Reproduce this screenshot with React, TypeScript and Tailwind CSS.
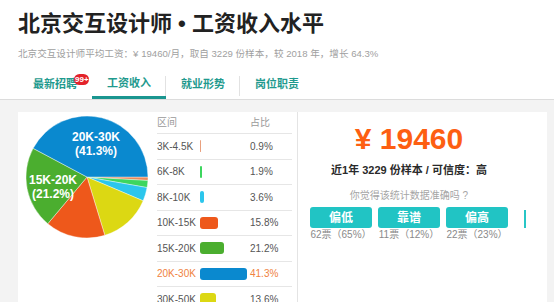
import React from "react";

const FONT = { fontFamily: '"Liberation Sans", "Noto Sans CJK SC", Arial, sans-serif' };

const slices = [
  { a0: 0, a1: 3.3, c: "#ea8a5c" },
  { a0: 3.3, a1: 10, c: "#3dd65e" },
  { a0: 10, a1: 23, c: "#2cc6ec" },
  { a0: 23, a1: 73, c: "#dcd813" },
  { a0: 73, a1: 130, c: "#ee581b" },
  { a0: 130, a1: 208, c: "#4bae2f" },
  { a0: 208, a1: 360, c: "#0a89cf" },
];

function arc(cx: number, cy: number, r: number, a0: number, a1: number) {
  const rad = (d: number) => (d * Math.PI) / 180;
  const x0 = cx + r * Math.cos(rad(a0));
  const y0 = cy + r * Math.sin(rad(a0));
  const x1 = cx + r * Math.cos(rad(a1));
  const y1 = cy + r * Math.sin(rad(a1));
  const large = a1 - a0 > 180 ? 1 : 0;
  return `M ${cx} ${cy} L ${x0} ${y0} A ${r} ${r} 0 ${large} 1 ${x1} ${y1} Z`;
}

const rows = [
  { label: "3K-4.5K", pct: "0.9%", w: 1, c: "#e9a07e" },
  { label: "6K-8K", pct: "1.9%", w: 2, c: "#3dd65e" },
  { label: "8K-10K", pct: "3.6%", w: 4, c: "#2cc6ec" },
  { label: "10K-15K", pct: "15.8%", w: 18, c: "#ee581b" },
  { label: "15K-20K", pct: "21.2%", w: 24, c: "#4bae2f" },
  { label: "20K-30K", pct: "41.3%", w: 47, c: "#0a89cf", hl: true },
  { label: "30K-50K", pct: "13.6%", w: 16, c: "#dcd813" },
];

const tabs = [
  { t: "最新招聘", badge: true },
  { t: "工资收入", active: true, sep: true },
  { t: "就业形势", sep: true },
  { t: "岗位职责" },
];

const votes = [
  { t: "偏低", v: "62票（65%）" },
  { t: "靠谱", v: "11票（12%）" },
  { t: "偏高", v: "22票（23%）" },
];

export default function App() {
  return (
    <div style={FONT} className="w-[554px] h-[302px] overflow-hidden bg-[#f3f3f3]">
      <div className="bg-white border-b border-[#dcdcdc] pl-[18px] pt-[11px]">
        <div className="text-[22px] leading-[26px] font-bold text-[#222]">
          北京交互设计师 • 工资收入水平
        </div>
        <div className="mt-[9px] text-[9.6px] leading-[16px] text-[#a0a0a0]">
          北京交互设计师平均工资：¥ 19460/月，取自 3229 份样本，较 2018 年，增长 64.3%
        </div>
        <div className="mt-[10px] flex h-[27px]">
          {tabs.map((tab) => (
            <div
              key={tab.t}
              className={`relative w-[74px] flex items-center justify-center pb-[2px] text-[11px] font-bold text-[#1f9a8e] ${
                tab.active ? "border-b-[3px] border-[#1a9690]" : ""
              }`}
            >
              <span>{tab.t}</span>
              {tab.badge && (
                <span className="absolute left-[56px] top-[2px] w-[15px] h-[11px] rounded-full bg-[#e3222a] text-white text-[8px] leading-[11px] font-bold overflow-hidden pl-[1px]">
                  99+
                </span>
              )}
              {tab.sep && (
                <span className="absolute right-0 top-[4px] w-px h-[20px] bg-[#e2e2e2]" />
              )}
            </div>
          ))}
        </div>
      </div>

      <div className="mt-[12px] ml-[18px] w-[529px] h-[190px] bg-white flex">
        {/* pie */}
        <div className="w-[135px] shrink-0">
          <svg width="135" height="140" viewBox="0 0 135 140">
            {slices.map((s, i) => (
              <path key={i} d={arc(69, 65, 61, s.a0, s.a1)} fill={s.c} stroke="#ffffff" strokeWidth="0.4" />
            ))}
            <g fill="#ffffff" fontSize="12" fontWeight="bold" textAnchor="middle" style={FONT}>
              <text x="78" y="29">20K-30K</text>
              <text x="78" y="43">(41.3%)</text>
              <text x="35" y="72">15K-20K</text>
              <text x="35" y="86">(21.2%)</text>
            </g>
          </svg>
        </div>

        {/* table */}
        <div className="w-[140px] shrink-0 pl-[4px] pr-[1px]">
          <div className="h-[22px] flex items-center border-b border-[#e6e6e6] text-[10px] text-[#9a9a9a]">
            <span className="w-[93px]">区间</span>
            <span>占比</span>
          </div>
          {rows.map((r) => (
            <div
              key={r.label}
              className={`h-[25.5px] flex items-center border-b border-[#e6e6e6] text-[10px] ${
                r.hl ? "text-[#f0823e]" : "text-[#555]"
              }`}
            >
              <span className="w-[43px]">{r.label}</span>
              <span className="w-[50px] flex items-center">
                <span
                  className="h-[12px] rounded-[3px]"
                  style={{ width: r.w, background: r.c }}
                />
              </span>
              <span>{r.pct}</span>
            </div>
          ))}
        </div>

        <div className="w-[4px] shrink-0" />
        <div className="w-px shrink-0 bg-[#e4e4e4]" />

        {/* right */}
        <div className="flex-1 flex">
          <div className="w-[222px] flex flex-col items-center pt-[10px]">
            <div className="text-[30px] leading-[34px] font-bold text-[#fd5f12]">¥ 19460</div>
            <div className="mt-[7px] text-[11px] leading-[14px] font-bold text-[#2a2a2a]">
              近1年 3229 份样本 / 可信度：高
            </div>
            <div className="mt-[12px] text-[10px] leading-[14px] text-[#a5a5a5]">
              你觉得该统计数据准确吗 ?
            </div>
            <div className="mt-[4px] flex gap-[6px]">
              {votes.map((v) => (
                <div key={v.t} className="w-[62px] flex flex-col items-center">
                  <div className="w-[62px] h-[21px] rounded-[3px] bg-[#21c4c4] text-white text-[12px] font-bold flex items-center justify-center">
                    {v.t}
                  </div>
                  <div className="text-[10px] leading-[13px] text-[#8a8a8a] whitespace-nowrap">{v.v}</div>
                </div>
              ))}
            </div>
          </div>
          <div className="pt-[98px] pl-[4px]">
            <div className="w-[2px] h-[18px] bg-[#27c6c6]" />
          </div>
        </div>
      </div>
    </div>
  );
}
